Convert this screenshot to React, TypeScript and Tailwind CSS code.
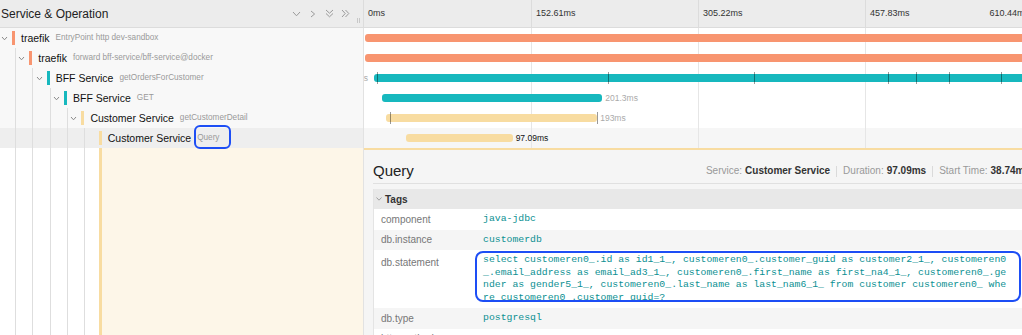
import React from 'react';

const SCALE = 668 / 610.44;

type Row = {
  level: number;
  name: string;
  op: string;
  chevron: boolean;
  marker: string;
  barColor: string;
  start: number;
  dur: number;
  label?: string;
  labelLeft?: string;
  labelDark?: boolean;
  ticks?: number[];
  selected?: boolean;
  boxed?: boolean;
};

const rows: Row[] = [
  { level: 0, name: 'traefik', op: 'EntryPoint http dev-sandbox', chevron: true, marker: 'bg-[#F89570]', barColor: 'bg-[#F89570]', start: 0.9, dur: 620 },
  { level: 1, name: 'traefik', op: 'forward bff-service/bff-service@docker', chevron: true, marker: 'bg-[#F89570]', barColor: 'bg-[#F89570]', start: 0.9, dur: 620 },
  { level: 2, name: 'BFF Service', op: 'getOrdersForCustomer', chevron: true, marker: 'bg-[#17B8BE]', barColor: 'bg-[#17B8BE]', start: 9.14, dur: 610, labelLeft: '601.3ms', ticks: [13, 244, 390, 524, 552, 585, 637] },
  { level: 3, name: 'BFF Service', op: 'GET', chevron: true, marker: 'bg-[#17B8BE]', barColor: 'bg-[#17B8BE]', start: 16.45, dur: 201.3, label: '201.3ms' },
  { level: 4, name: 'Customer Service', op: 'getCustomerDetail', chevron: true, marker: 'bg-[#F8DCA1]', barColor: 'bg-[#F8DCA1]', start: 20.1, dur: 193, label: '193ms', ticks: [26, 233] },
  { level: 5, name: 'Customer Service', op: 'Query', chevron: false, marker: 'bg-[#F8DCA1]', barColor: 'bg-[#F8DCA1]', start: 38.74, dur: 97.09, label: '97.09ms', labelDark: true, selected: true, boxed: true },
];

function Guides({ count }: { count: number }) {
  return (
    <>
      {Array.from({ length: count }).map((_, i) => (
        <div key={i} className="w-[17.35px] shrink-0 h-full">
          <div className="ml-[15px] w-px h-full bg-[#dedede]" />
        </div>
      ))}
    </>
  );
}

function SmallChevron() {
  return (
    <svg width="7" height="5" viewBox="0 0 7 5" className="ml-[1px]">
      <polyline points="1,1 3.5,3.8 6,1" fill="none" stroke="#8a8a8a" strokeWidth="1" />
    </svg>
  );
}

function TimelineGrid({ children, bg }: { children?: React.ReactNode; bg: string }) {
  return (
    <div className={`relative w-[668px] shrink-0 h-full grid grid-cols-4 overflow-hidden ${bg}`}>
      <div />
      <div className="border-l border-[#e6e6e6]" />
      <div className="border-l border-[#e6e6e6]" />
      <div className="border-l border-[#e6e6e6]" />
      {children}
    </div>
  );
}

function SpanRow({ r }: { r: Row }) {
  const left = r.start * SCALE;
  const width = r.dur * SCALE;
  return (
    <div className="flex h-[20px]">
      <div
        className={`w-[364px] shrink-0 h-full flex items-stretch border-r border-[#e2e2e2] ${
          r.selected ? 'bg-[#eeeeee]' : 'bg-[#f8f8f8]'
        }`}
      >
        <Guides count={r.level} />
        <div className="w-[12px] shrink-0 flex items-center">{r.chevron && <SmallChevron />}</div>
        <div className={`w-[3px] h-[14px] shrink-0 self-center ${r.marker}`} />
        <span className="ml-[6px] self-center whitespace-nowrap text-[10.5px] leading-[14px] text-[#111]">{r.name}</span>
        <span className="relative ml-[6px] self-center whitespace-nowrap text-[8.2px] leading-[12px] text-[#9a9a9a]">
          {r.op}
          {r.boxed && (
            <span className="absolute z-10 left-[-3px] top-[-7px] w-[37px] h-[24px] rounded-[6px] border-2 border-[#1d4ef5]" />
          )}
        </span>
      </div>
      <TimelineGrid bg={r.selected ? 'bg-[#f6f6f6]' : 'bg-white'}>
        {r.labelLeft && (
          <span
            className="absolute top-[4px] text-[8.5px] leading-[12px] text-[#aaa] whitespace-nowrap"
            style={{ right: 668 - left + 6 }}
          >
            {r.labelLeft}
          </span>
        )}
        <div className={`absolute top-[6px] h-[8px] rounded-[3px] ${r.barColor}`} style={{ left, width }} />
        {r.ticks?.map((t) => (
          <div key={t} className="absolute top-[4px] h-[12px] w-px bg-[#00000066]" style={{ left: t }} />
        ))}
        {r.label && (
          <span
            className={`absolute top-[4px] text-[8.5px] leading-[12px] whitespace-nowrap ${
              r.labelDark ? 'text-[#111]' : 'text-[#aaa]'
            }`}
            style={{ left: left + width + 3 }}
          >
            {r.label}
          </span>
        )}
      </TimelineGrid>
    </div>
  );
}

const statement = [
  'select customeren0_.id as id1_1_, customeren0_.customer_guid as customer2_1_, customeren0',
  '_.email_address as email_ad3_1_, customeren0_.first_name as first_na4_1_, customeren0_.ge',
  'nder as gender5_1_, customeren0_.last_name as last_nam6_1_ from customer customeren0_ whe',
  're customeren0_.customer_guid=?',
];

function KV({ k, children, gray, tall }: { k: string; children: React.ReactNode; gray?: boolean; tall?: boolean }) {
  return (
    <div className={`flex min-h-[20px] ${gray ? 'bg-[#f5f5f5]' : 'bg-white'}`}>
      <div className={`w-[109px] shrink-0 pl-[7px] text-[10px] text-[#777] ${tall ? 'pt-[6px] leading-[14px]' : 'flex items-center'}`}>
        {k}
      </div>
      <div className="flex-1 relative py-[4px] font-['Liberation_Mono',monospace] text-[9.8px] leading-[12.5px] text-[#0b9092]">
        {children}
      </div>
    </div>
  );
}

export default function App() {
  return (
    <div className="w-[1022px] h-[335px] overflow-hidden bg-white font-['Liberation_Sans',Arial,sans-serif]">
      <div className="w-[1032px]">
        {/* Header */}
        <div className="flex h-[28px] border-b border-[#dcdcdc] bg-[#ececec]">
          <div className="w-[364px] shrink-0 flex items-center border-r border-[#dcdcdc] relative">
            <span className="pl-[1px] text-[12px] text-[#222]">Service &amp; Operation</span>
            <div className="ml-auto flex items-center mr-[13px]">
              <svg width="9" height="6" viewBox="0 0 9 6" className="mr-[9px]">
                <polyline points="1,1 4.5,4.8 8,1" fill="none" stroke="#9a9a9a" strokeWidth="1" />
              </svg>
              <svg width="6" height="8" viewBox="0 0 6 8" className="mr-[9px]">
                <polyline points="1,1 4.6,4 1,7" fill="none" stroke="#9a9a9a" strokeWidth="1" />
              </svg>
              <svg width="9" height="9" viewBox="0 0 9 9" className="mr-[7px]">
                <polyline points="1,1 4.5,4.2 8,1" fill="none" stroke="#9a9a9a" strokeWidth="1" />
                <polyline points="1,4.5 4.5,7.8 8,4.5" fill="none" stroke="#9a9a9a" strokeWidth="1" />
              </svg>
              <svg width="9" height="9" viewBox="0 0 9 9">
                <polyline points="1,1 4.2,4.5 1,8" fill="none" stroke="#9a9a9a" strokeWidth="1" />
                <polyline points="4.5,1 7.8,4.5 4.5,8" fill="none" stroke="#9a9a9a" strokeWidth="1" />
              </svg>
            </div>
            <div className="absolute right-[3px] top-[18px] flex gap-[1px]">
              <div className="w-px h-[5px] bg-[#c8c8c8]" />
              <div className="w-px h-[5px] bg-[#c8c8c8]" />
            </div>
          </div>
          <div className="w-[668px] shrink-0 grid grid-cols-4 text-[9px] text-[#333]">
            <div className="flex items-center pl-[4px]">0ms</div>
            <div className="flex items-center pl-[4px] border-l border-[#dcdcdc]">152.61ms</div>
            <div className="flex items-center pl-[4px] border-l border-[#dcdcdc]">305.22ms</div>
            <div className="flex items-center justify-between pl-[4px] pr-[3px] border-l border-[#dcdcdc]">
              <span>457.83ms</span>
              <span>610.44ms</span>
            </div>
          </div>
        </div>

        {rows.map((r, i) => (
          <SpanRow key={i} r={r} />
        ))}

        {/* Detail row */}
        <div className="flex h-[200px]">
          <div className="w-[364px] shrink-0 flex items-stretch bg-white border-r border-[#e2e2e2]">
            <Guides count={5} />
            <div className="w-[12px] shrink-0" />
            <div className="w-[3px] shrink-0 bg-[#F8DCA1]" />
            <div className="flex-1 bg-[#fdf6e8]" />
          </div>
          <div className="w-[668px] shrink-0 bg-[#f5f5f5] border-t-2 border-[#F8DCA1] pl-[9px] pr-[2px]">
            <div className="flex items-center justify-between pt-[12px] pb-[3px] border-b border-[#e0e0e0]">
              <span className="text-[15px] leading-[18px] text-[#222]">Query</span>
              <div className="flex items-center text-[10px] leading-[18px] text-[#999] whitespace-nowrap">
                <span>Service: </span>
                <span className="ml-[3px] font-bold text-[#333]">Customer Service</span>
                <span className="mx-[6px] w-px h-[11px] bg-[#dadada]" />
                <span>Duration: </span>
                <span className="ml-[3px] font-bold text-[#333]">97.09ms</span>
                <span className="mx-[6px] w-px h-[11px] bg-[#dadada]" />
                <span>Start Time: </span>
                <span className="ml-[3px] font-bold text-[#333]">38.74ms</span>
              </div>
            </div>
            <div className="mt-[5px] border-l border-[#e4e4e4]">
              <div className="flex items-center h-[20px] bg-[#e8e8e8] pl-[2px]">
                <svg width="6" height="4" viewBox="0 0 6 4" className="mr-[3px]">
                  <polyline points="0.5,0.5 3,3.2 5.5,0.5" fill="none" stroke="#999" strokeWidth="0.9" />
                </svg>
                <span className="text-[10px] font-bold text-[#333]">Tags</span>
              </div>
              <KV k="component">java-jdbc</KV>
              <KV k="db.instance" gray>
                customerdb
              </KV>
              <KV k="db.statement" tall>
                {statement.map((l, i) => (
                  <div key={i} className="whitespace-pre">
                    {l}
                  </div>
                ))}
                <div className="absolute left-[-8px] top-[1px] w-[546px] h-[51px] rounded-[8px] border-2 border-[#1d4ef5]" />
              </KV>
              <KV k="db.type" gray>
                postgresql
              </KV>
              <KV k="http.method">GET</KV>
            </div>
          </div>
        </div>
      </div>
    </div>
  );
}
